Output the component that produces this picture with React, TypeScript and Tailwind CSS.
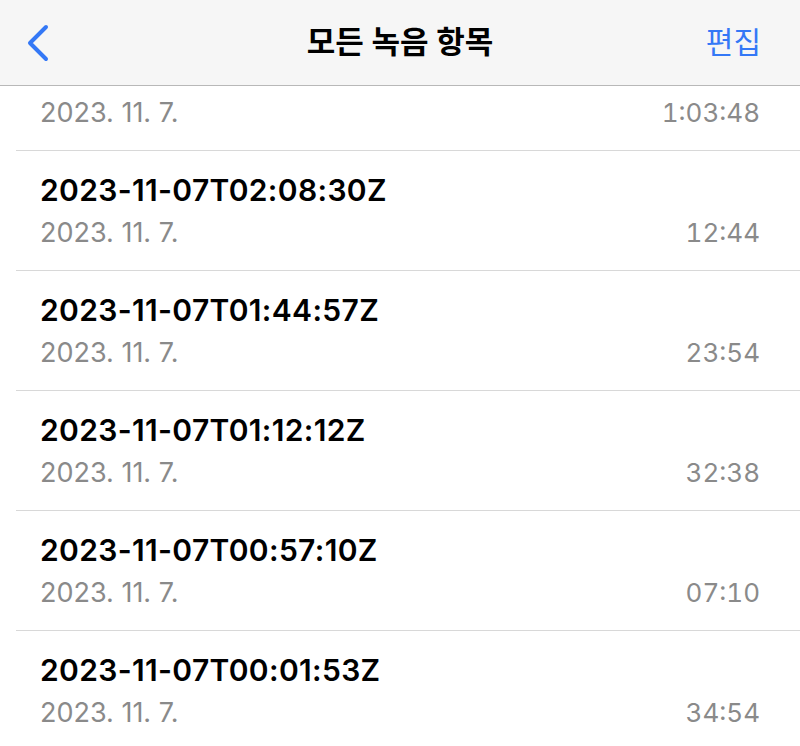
const rows = [
  { title: "2023-11-07T02:08:30Z", duration: "12:44" },
  { title: "2023-11-07T01:44:57Z", duration: "23:54" },
  { title: "2023-11-07T01:12:12Z", duration: "32:38" },
  { title: "2023-11-07T00:57:10Z", duration: "07:10" },
  { title: "2023-11-07T00:01:53Z", duration: "34:54" },
]

const font = { fontFamily: "Inter, 'Noto Sans CJK KR', sans-serif" }

export default function App() {
  return (
    <div className="w-[800px] h-[746px] overflow-hidden bg-white" style={font}>
      <div className="h-[86px] bg-[#f6f6f6] border-b border-[#b8b8b8] flex items-center justify-between px-[26px] relative">
        <svg width="24" height="38" viewBox="0 0 24 38" fill="none">
          <path d="M20 3 L4 19 L20 35" stroke="#3478f6" strokeWidth="4" strokeLinecap="round" strokeLinejoin="round" />
        </svg>
        <div className="absolute left-0 right-0 text-center text-[31px] font-semibold text-black pointer-events-none">모든 녹음 항목</div>
        <div className="text-[30px] text-[#3478f6] mr-[13px]">편집</div>
      </div>
      <div className="h-[64px] pt-[11px] pl-[40px] pr-[40px] flex items-baseline justify-between text-[27px] leading-[32px] text-[#8a8a8a]">
        <span>2023. 11. 7.</span>
        <span className="tabular-nums text-[26px]">1:03:48</span>
      </div>
      {rows.map((r) => (
        <div key={r.title} className="ml-[16px] border-t border-[#d8d8d8]">
          <div className="h-[119px] pt-[21px] pl-[24px] pr-[40px]">
            <div className="text-[30px] font-semibold text-black leading-[36px] tracking-[0.35px]">{r.title}</div>
            <div className="flex items-baseline justify-between text-[27px] text-[#8a8a8a] leading-[32px] mt-[9px]">
              <span>2023. 11. 7.</span>
              <span className="tabular-nums text-[26px]">{r.duration}</span>
            </div>
          </div>
        </div>
      ))}
    </div>
  )
}
